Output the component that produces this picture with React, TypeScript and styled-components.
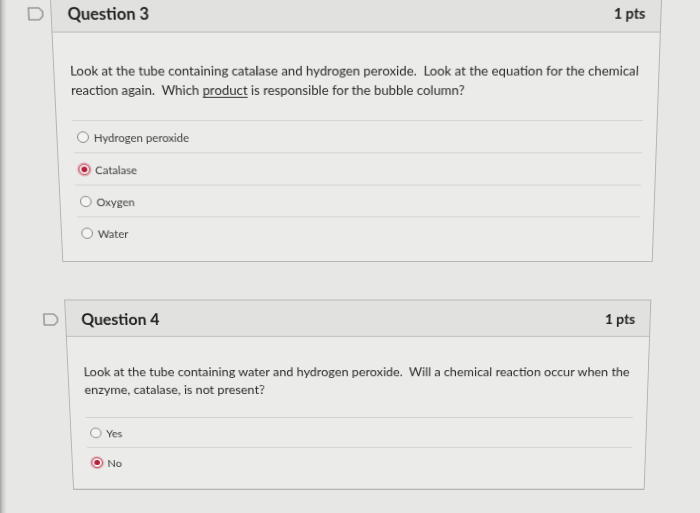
import React from "react";
import styled, { createGlobalStyle } from "styled-components";

const GlobalStyle = createGlobalStyle`
  html, body {
    margin: 0;
    height: 513px;
    overflow: hidden;
    font-family: Lato, "Open Sans", sans-serif;
    color: #2f2f2f;
  }
  body {
    /* edge of the monitor bezel on the left of the photo */
    background: linear-gradient(to right, #a3a3a1 0, #cfcfcd 3px, #e7e7e5 7px);
  }
`;

// the screenshot is a photo of a monitor, so the whole page leans back a little
const Stage = styled.div`
  margin-top: -8px;
  padding-left: 27px;
  display: flex;
  flex-direction: column;
  gap: 41px;
  transform-origin: 399px 8px;
  transform: perspective(1000px) rotateX(-7.7deg);
`;

const QuestionRow = styled.div`
  display: flex;
  align-items: flex-start;
  gap: 7px;
`;

const FlagIcon = styled.svg`
  flex: none;
  width: 16px;
  height: 14px;
  margin-top: 15px;
`;

const Card = styled.div`
  width: 612px;
  box-sizing: border-box;
  border: 1px solid #b4b4b2;
  background: #ebebe9;
`;

const Header = styled.div`
  height: 40px;
  box-sizing: border-box;
  display: flex;
  align-items: center;
  justify-content: space-between;
  padding: 2px 15px 0 16px;
  background: #e1e1df;
  border-bottom: 1px solid #b9b9b7;
`;

const Title = styled.span`
  font-size: 16.5px;
  font-weight: 700;
  color: #222;
`;

const Points = styled.span`
  font-size: 14.5px;
  font-weight: 700;
  color: #222;
`;

const Body = styled.div`
  padding: 29px 14px 14px 16px;
`;

const Prompt = styled.p`
  margin: 0 0 21px;
  font-size: 13.3px;
  line-height: 20px;
  color: #2c2c2c;
  white-space: pre-wrap;

  u {
    text-underline-offset: 2px;
  }
`;

const AnswerRow = styled.div`
  height: 34px;
  box-sizing: border-box;
  display: flex;
  align-items: center;
  gap: 5px;
  padding: 1px 0 0 4px;
  border-top: 1px solid #d2d2d0;
`;

const Radio = styled.span<{ $checked?: boolean }>`
  position: relative;
  flex: none;
  width: 12px;
  height: 12px;
  box-sizing: border-box;
  border-radius: 50%;
  border: 1px solid ${(p) => (p.$checked ? "#c23a50" : "#858585")};
  background: #f3f3f1;
  box-shadow: ${(p) => (p.$checked ? "0 0 0 1.5px rgba(214, 120, 135, 0.45)" : "none")};

  &::after {
    content: "";
    display: ${(p) => (p.$checked ? "block" : "none")};
    position: absolute;
    left: 2px;
    top: 2px;
    width: 6px;
    height: 6px;
    border-radius: 50%;
    background: #b3203a;
  }
`;

const AnswerLabel = styled.span`
  font-size: 11.6px;
  color: #3c3c3c;
`;

const Flag = () => (
  <FlagIcon viewBox="0 0 16 14">
    <path
      d="M1 1 H11.5 L15 4.8 V9.2 L11.5 13 H1 Z"
      fill="none"
      stroke="#989898"
      strokeWidth="1.6"
      strokeLinejoin="round"
    />
  </FlagIcon>
);

interface QuestionProps {
  num: number;
  prompt: React.ReactNode;
  answers: string[];
  selected: number;
}

const Question: React.FC<QuestionProps> = ({ num, prompt, answers, selected }) => (
  <QuestionRow>
    <Flag />
    <Card>
      <Header>
        <Title>Question {num}</Title>
        <Points>1 pts</Points>
      </Header>
      <Body>
        <Prompt>{prompt}</Prompt>
        {answers.map((a, i) => (
          <AnswerRow key={a}>
            <Radio $checked={i === selected} />
            <AnswerLabel>{a}</AnswerLabel>
          </AnswerRow>
        ))}
      </Body>
    </Card>
  </QuestionRow>
);

export default function App() {
  return (
    <>
      <GlobalStyle />
      <Stage>
        <Question
          num={3}
          prompt={
            <>
              Look at the tube containing catalase and hydrogen peroxide.{"  "}Look at the equation for the
              chemical{"\n"}reaction again.{"  "}Which <u>product</u> is responsible for the bubble column?
            </>
          }
          answers={["Hydrogen peroxide", "Catalase", "Oxygen", "Water"]}
          selected={1}
        />
        <Question
          num={4}
          prompt={
            <>
              Look at the tube containing water and hydrogen peroxide.{"  "}Will a chemical reaction occur when
              the{"\n"}enzyme, catalase, is not present?
            </>
          }
          answers={["Yes", "No"]}
          selected={1}
        />
      </Stage>
    </>
  );
}
